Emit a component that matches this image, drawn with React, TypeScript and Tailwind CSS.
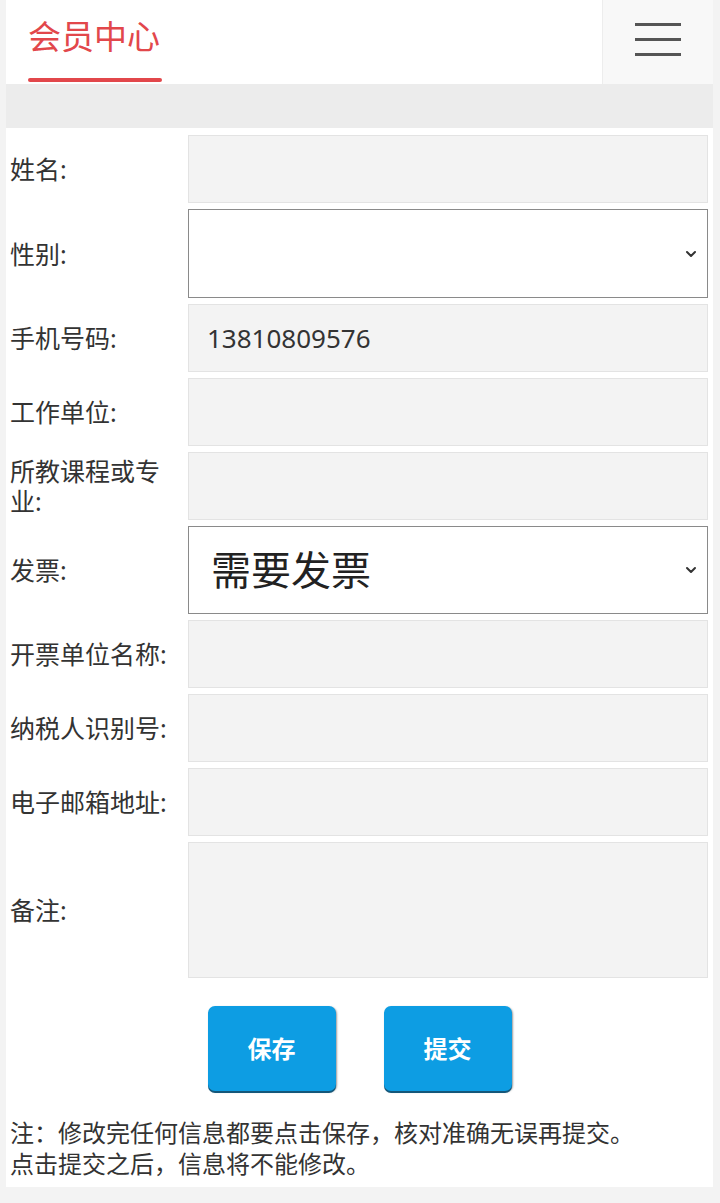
import { ChevronDown } from "lucide-react";

const font = { fontFamily: '"Noto Sans", "Noto Sans CJK SC", sans-serif' };

function Field({ label, children }: { label: string; children: React.ReactNode }) {
  return (
    <div className="flex items-center">
      <div className="w-[182px] shrink-0 pl-[4px] pr-[6px] text-[25px] leading-[30px] text-[#333]">{label}</div>
      <div className="flex-1">{children}</div>
    </div>
  );
}

function TextBox({ value, tall }: { value?: string; tall?: boolean }) {
  return (
    <div
      className={`flex items-center border border-[#e3e3e3] bg-[#f3f3f3] px-[18px] text-[26px] text-[#333] ${
        tall ? "h-[136px]" : "h-[68px]"
      }`}
    >
      {value}
    </div>
  );
}

function SelectBox({ value, h }: { value?: string; h: string }) {
  return (
    <div className={`flex items-center justify-between border border-[#8a8a8a] bg-white pl-[22px] pr-[8px] ${h}`}>
      <span className="text-[40px] text-[#222]">{value}</span>
      <ChevronDown size={16} strokeWidth={3} className="text-[#333]" />
    </div>
  );
}

export default function App() {
  return (
    <div className="min-h-[1203px] bg-[#f3f3f3] pl-[6px] pr-[7px]" style={font}>
      <div className="bg-white">
        {/* header */}
        <div className="flex h-[84px]">
          <div className="flex-1 pl-[22px]">
            <div className="inline-flex h-full flex-col">
              <div className="pt-[14px] text-[33px] leading-[46px] text-[#e2474b]">会员中心</div>
              <div className="mt-auto mb-[2px] h-[4px] w-[134px] rounded-full bg-[#e2474b]" />
            </div>
          </div>
          <div className="flex w-[111px] flex-col items-center justify-center gap-[12px] border-l border-[#ededed] bg-[#f8f8f8] pb-[6px]">
            <div className="h-[3px] w-[46px] bg-[#555]" />
            <div className="h-[3px] w-[46px] bg-[#555]" />
            <div className="h-[3px] w-[46px] bg-[#555]" />
          </div>
        </div>
        <div className="h-[44px] bg-[#ececec]" />

        {/* form */}
        <div className="flex flex-col gap-[6px] pt-[7px] pr-[5px]">
          <Field label="姓名:"><TextBox /></Field>
          <Field label="性别:"><SelectBox h="h-[89px]" /></Field>
          <Field label="手机号码:"><TextBox value="13810809576" /></Field>
          <Field label="工作单位:"><TextBox /></Field>
          <Field label="所教课程或专业:"><TextBox /></Field>
          <Field label="发票:"><SelectBox value="需要发票" h="h-[88px]" /></Field>
          <Field label="开票单位名称:"><TextBox /></Field>
          <Field label="纳税人识别号:"><TextBox /></Field>
          <Field label="电子邮箱地址:"><TextBox /></Field>
          <Field label="备注:"><TextBox tall /></Field>
        </div>

        {/* buttons */}
        <div className="flex justify-center gap-[48px] pt-[28px]">
          <button className="h-[85px] w-[128px] rounded-[7px] bg-[#0d9de3] text-[24px] font-semibold text-white shadow-[0_2px_0_#14577a,1px_1px_2px_rgba(0,0,0,0.4)]">保存</button>
          <button className="h-[85px] w-[128px] rounded-[7px] bg-[#0d9de3] text-[24px] font-semibold text-white shadow-[0_2px_0_#14577a,1px_1px_2px_rgba(0,0,0,0.4)]">提交</button>
        </div>

        {/* note */}
        <div className="px-[4px] pt-[26px] pb-[8px] text-[24px] leading-[31px] text-[#333]">
          注：修改完任何信息都要点击保存，核对准确无误再提交。
          <br />
          点击提交之后，信息将不能修改。
        </div>
      </div>
    </div>
  );
}
